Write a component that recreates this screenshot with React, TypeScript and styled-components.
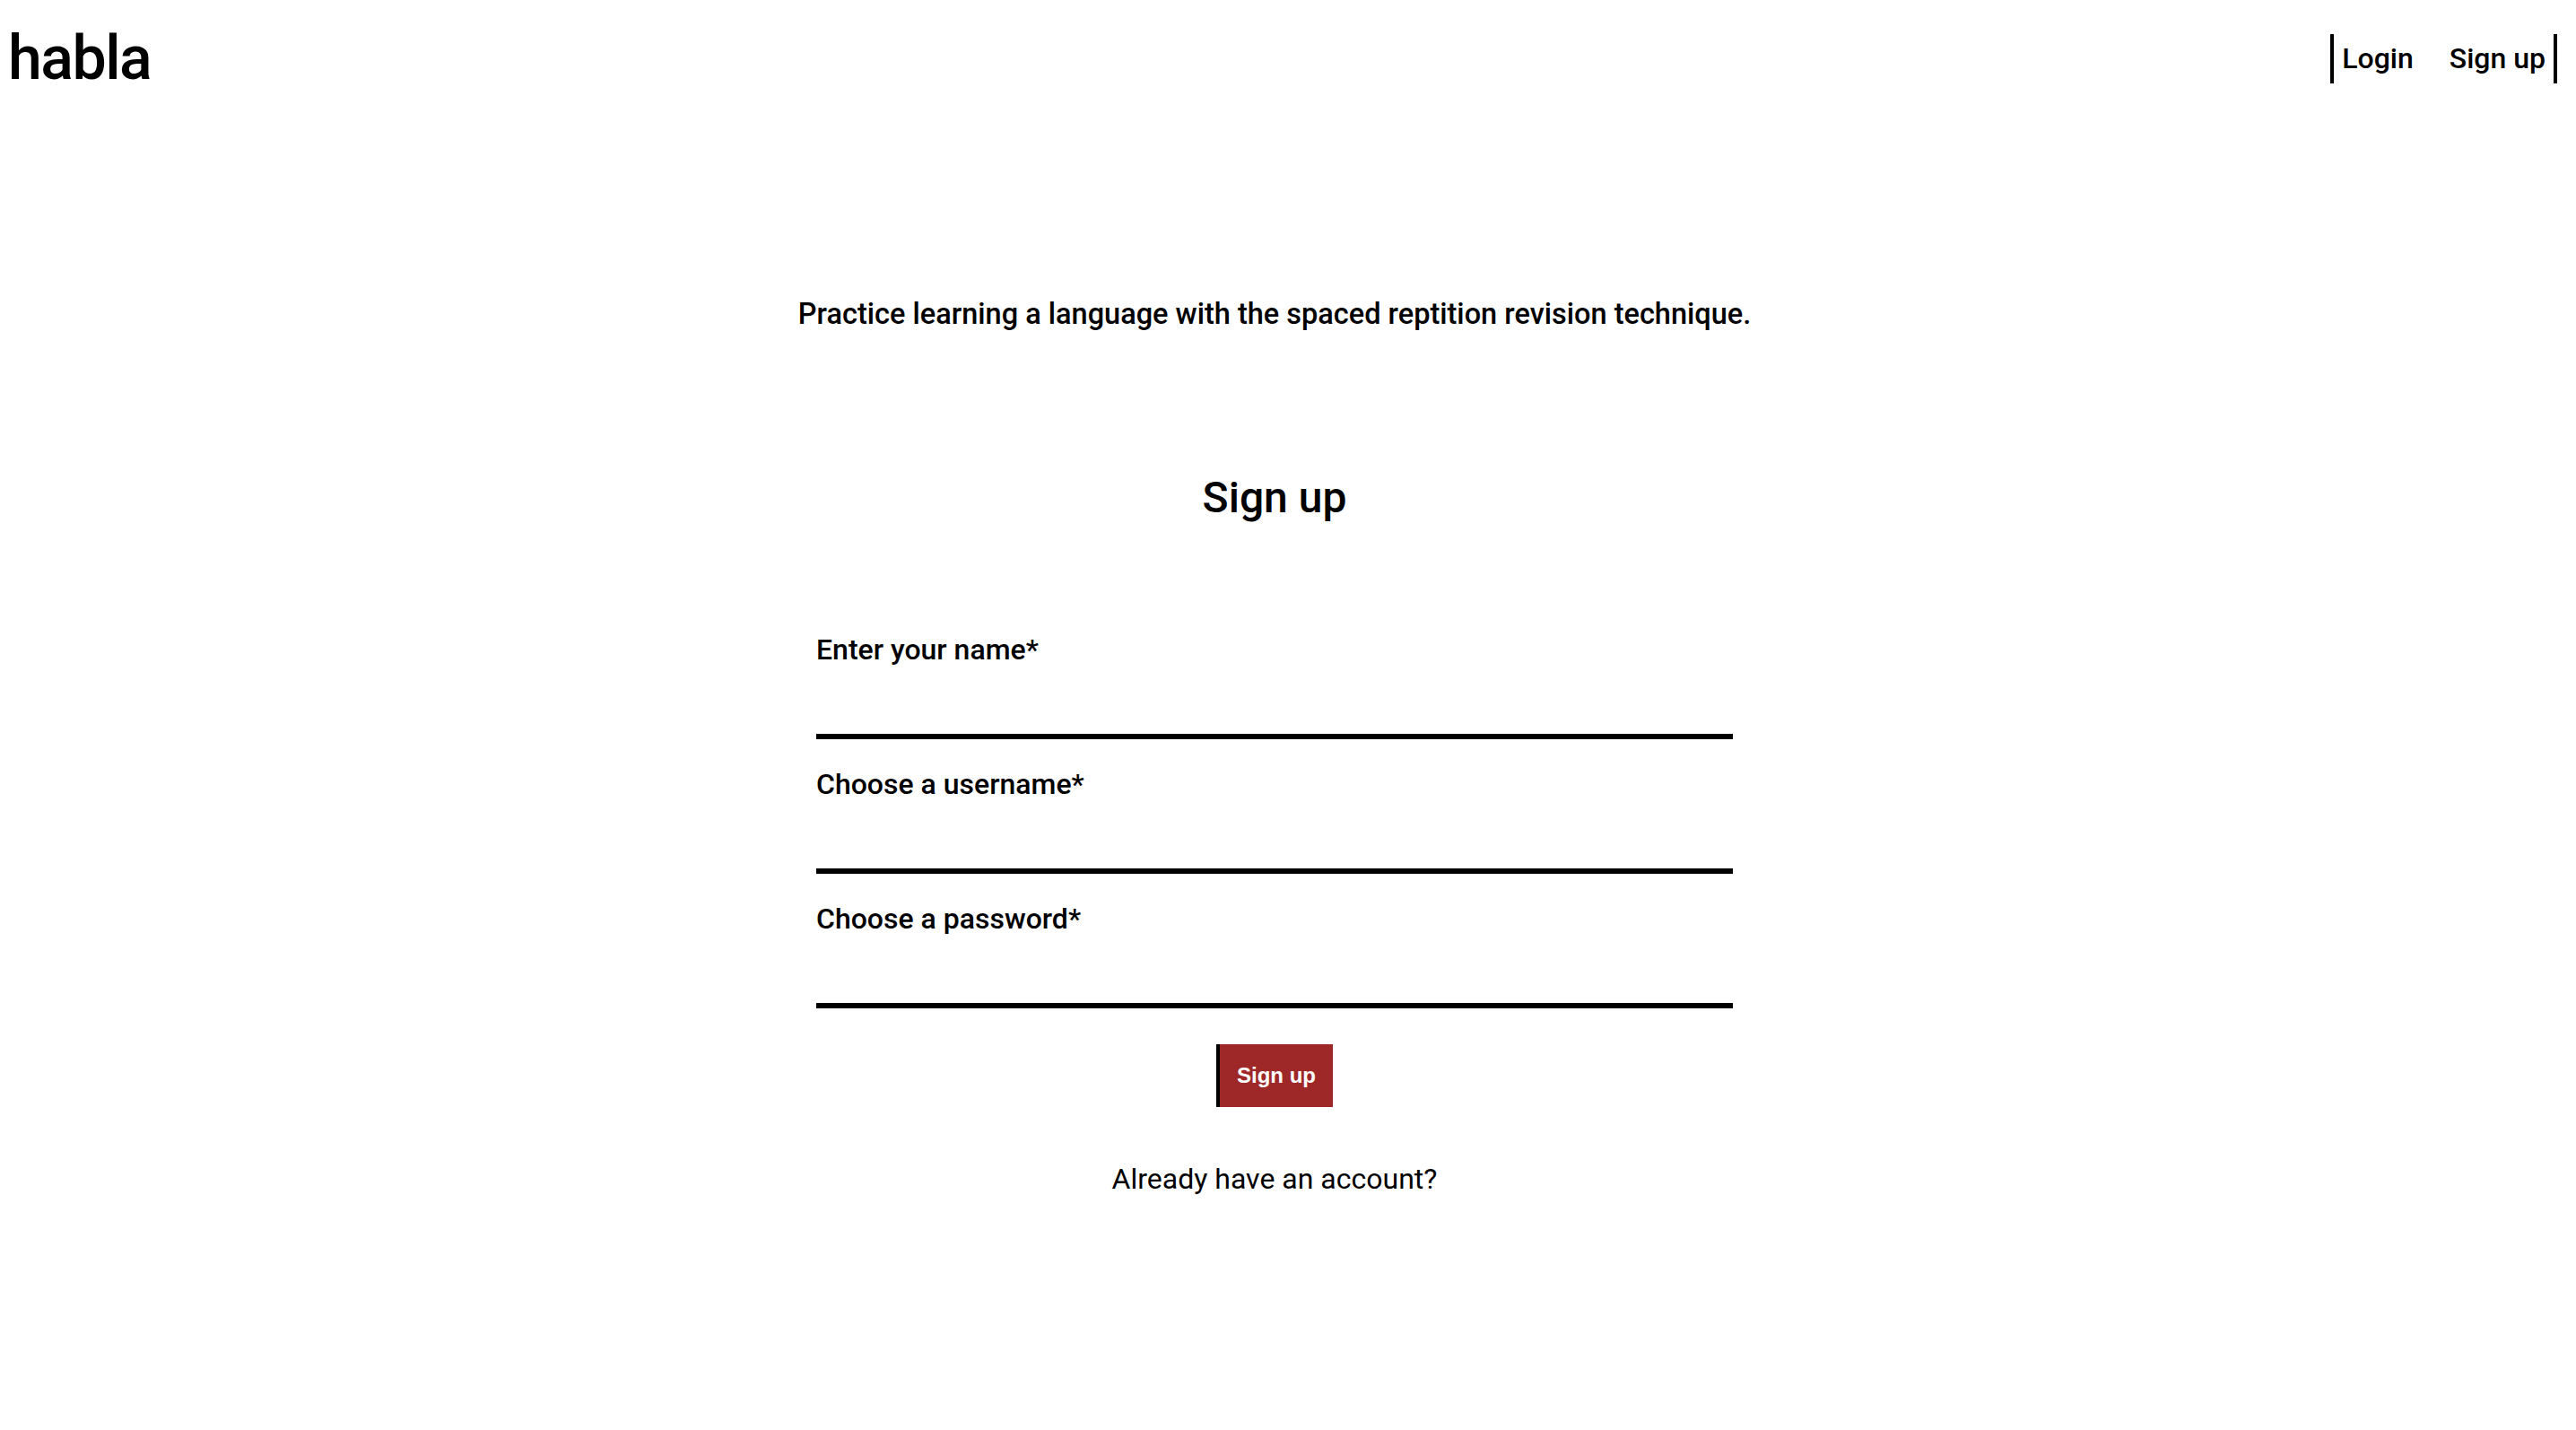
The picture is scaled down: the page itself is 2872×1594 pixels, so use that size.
import React from 'react';
import styled, { createGlobalStyle } from 'styled-components';

const GlobalStyle = createGlobalStyle`
  html, body {
    margin: 0;
    padding: 0;
    background: #ffffff;
  }

  body {
    font-family: Roboto, "Noto Sans", Arial, sans-serif;
    color: #000000;
  }
`;

type Field = {
  id: string,
  label: string,
  type: string,
}

const fields: Field[] = [
  { id: 'name', label: 'Enter your name*', type: 'text' },
  { id: 'username', label: 'Choose a username*', type: 'text' },
  { id: 'password', label: 'Choose a password*', type: 'password' },
];

const App = () => {
  return (
    <Page>
      <GlobalStyle />
      <Header>
        <Logo>habla</Logo>
        <Nav>
          <NavLink href="#login">Login</NavLink>
          <NavLink href="#signup">Sign up</NavLink>
        </Nav>
      </Header>

      <Main>
        <Tagline>
          Practice learning a language with the spaced reptition revision technique.
        </Tagline>

        <Heading>Sign up</Heading>

        <Form onSubmit={(e) => e.preventDefault()}>
          {fields.map((field) => (
            <FieldRow key={field.id}>
              <Label htmlFor={field.id}>{field.label}</Label>
              <Input id={field.id} type={field.type} />
            </FieldRow>
          ))}
          <SubmitButton type="submit">Sign up</SubmitButton>
        </Form>

        <AccountLink href="#login">Already have an account?</AccountLink>
      </Main>
    </Page>
  );
};

const Page = styled.div`
  min-height: 100vh;
`;

const Header = styled.header`
  display: flex;
  justify-content: space-between;
  align-items: center;
  padding: 30px 21px 0 9px;
`;

const Logo = styled.div`
  font-size: 68px;
  font-weight: 500;
  line-height: 70px;
  letter-spacing: -1.5px;
`;

const Nav = styled.nav`
  display: flex;
  align-items: center;
  gap: 40px;
  height: 55px;
  padding: 0 9px;
  border-left: 4px solid #000;
  border-right: 4px solid #000;
`;

const NavLink = styled.a`
  font-size: 32px;
  font-weight: 500;
  line-height: 1;
  color: #000;
  text-decoration: none;
`;

const Main = styled.main`
  display: flex;
  flex-direction: column;
  align-items: center;
  padding-right: 30px;
`;

const Tagline = styled.p`
  margin: 234px 0 0;
  font-size: 32.5px;
  font-weight: 500;
  line-height: 1;
`;

const Heading = styled.h1`
  margin: 164px 0 0;
  font-size: 48px;
  font-weight: 500;
  line-height: 1;
`;

const Form = styled.form`
  display: flex;
  flex-direction: column;
  align-items: center;
  width: 1022px;
  margin-top: 129px;
`;

const FieldRow = styled.div`
  display: flex;
  flex-direction: column;
  width: 100%;
  margin-bottom: 34px;

  &:last-of-type {
    margin-bottom: 40px;
  }
`;

const Label = styled.label`
  font-size: 32px;
  font-weight: 500;
  line-height: 1;
`;

const Input = styled.input`
  box-sizing: border-box;
  height: 84px;
  width: 100%;
  padding: 0;
  border: none;
  border-bottom: 6px solid #000;
  background: transparent;
  font-family: inherit;
  font-size: 30px;
  outline: none;
`;

const SubmitButton = styled.button`
  box-sizing: border-box;
  width: 130px;
  height: 70px;
  padding: 0;
  border: none;
  border-left: 4px solid #000;
  background: #9e2727;
  color: #ffffff;
  font-family: "Liberation Sans", Arial, sans-serif;
  font-size: 24px;
  font-weight: 700;
  cursor: pointer;
`;

const AccountLink = styled.a`
  margin-top: 64px;
  font-size: 32px;
  font-weight: 400;
  line-height: 1;
  color: #000;
  text-decoration: none;
`;

export default App;
